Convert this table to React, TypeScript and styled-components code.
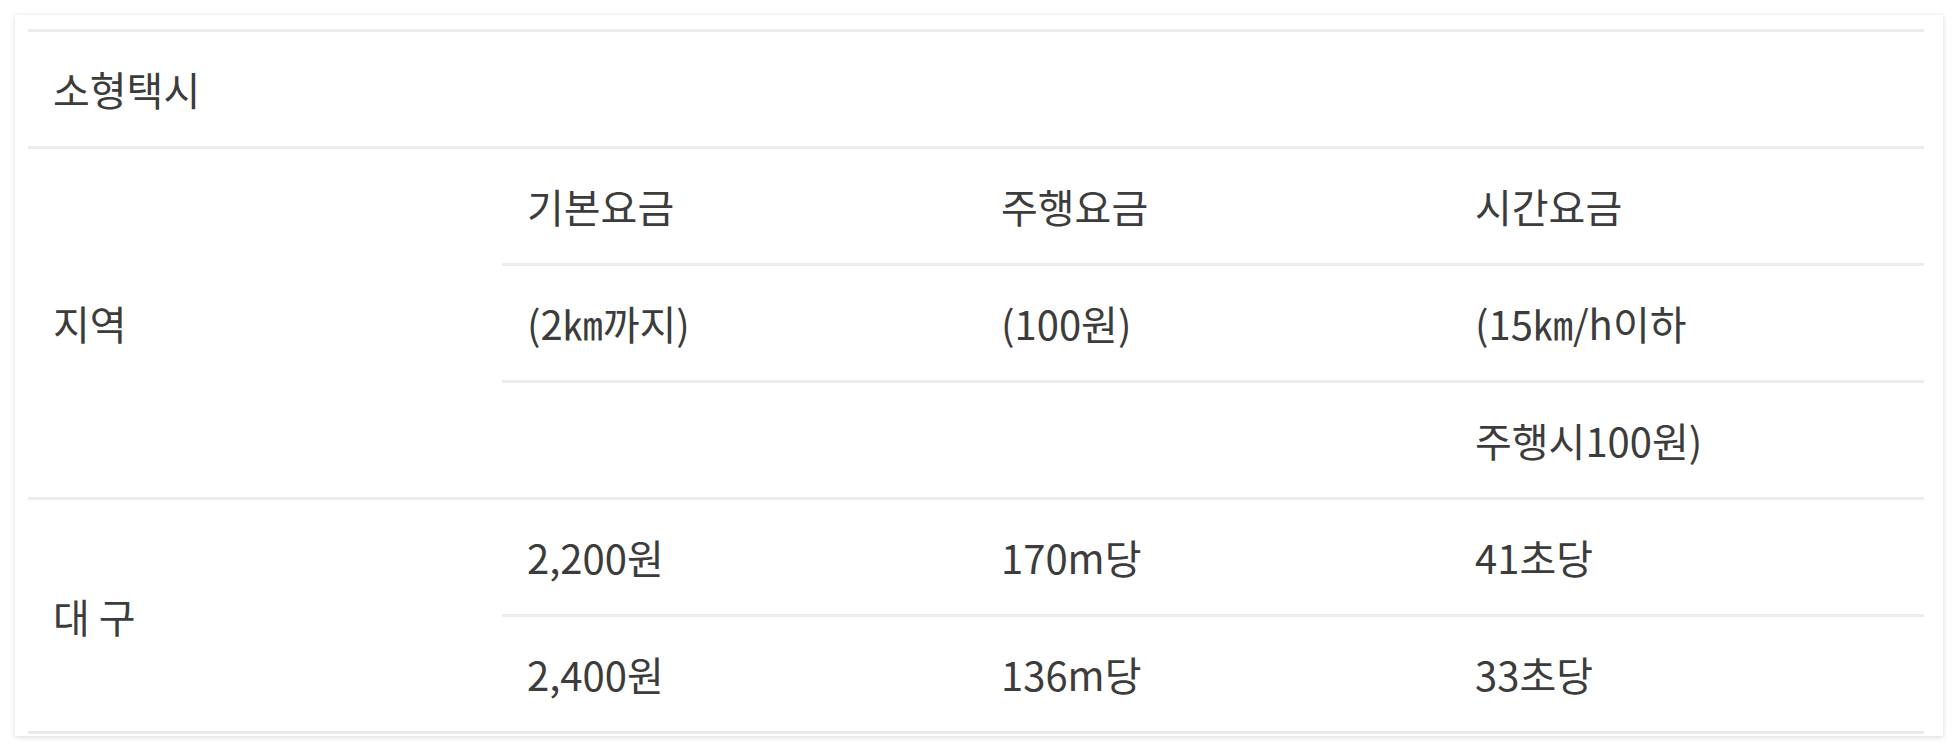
import React from 'react';
import styled, { createGlobalStyle } from 'styled-components';

const GlobalStyle = createGlobalStyle`
  html, body {
    margin: 0;
    padding: 0;
    background: #ffffff;
  }
  body {
    font-family: "Liberation Sans Narrow", "Noto Sans CJK KR", sans-serif;
  }
`;

const Card = styled.div`
  margin: 15px;
  padding: 14px 19px 2px 13px;
  background: #fff;
  box-shadow: 0 1px 5px rgba(0, 0, 0, 0.16);
`;

const Table = styled.table`
  width: 100%;
  table-layout: fixed;
  border-collapse: separate;
  border-spacing: 0;
  border-bottom: 3px solid #e9e9e9;
  color: #3c3c3c;
  font-size: 40px;
`;

const Cell = styled.td`
  box-sizing: border-box;
  height: 117px;
  padding: 0 25px;
  border-top: 3px solid #ececec;
  vertical-align: middle;
  text-align: left;
  font-weight: 400;
  white-space: nowrap;
  line-height: 1.2;
`;

interface FareRow {
  base: string;
  distance: string;
  time: string;
}

const headRows: FareRow[] = [
  { base: '기본요금', distance: '주행요금', time: '시간요금' },
  { base: '(2㎞까지)', distance: '(100원)', time: '(15㎞/h이하' },
  { base: '', distance: '', time: '주행시100원)' },
];

const daeguRows: FareRow[] = [
  { base: '2,200원', distance: '170m당', time: '41초당' },
  { base: '2,400원', distance: '136m당', time: '33초당' },
];

const Group: React.FC<{ label: string; rows: FareRow[] }> = ({ label, rows }) => (
  <>
    {rows.map((r, i) => (
      <tr key={i}>
        {i === 0 && <Cell rowSpan={rows.length}>{label}</Cell>}
        <Cell>{r.base}</Cell>
        <Cell>{r.distance}</Cell>
        <Cell>{r.time}</Cell>
      </tr>
    ))}
  </>
);

const App: React.FC = () => {
  return (
    <>
      <GlobalStyle />
      <Card>
        <Table>
          <tbody>
            <tr>
              <Cell colSpan={4}>소형택시</Cell>
            </tr>
            <Group label="지역" rows={headRows} />
            <Group label="대 구" rows={daeguRows} />
          </tbody>
        </Table>
      </Card>
    </>
  );
};

export default App;
